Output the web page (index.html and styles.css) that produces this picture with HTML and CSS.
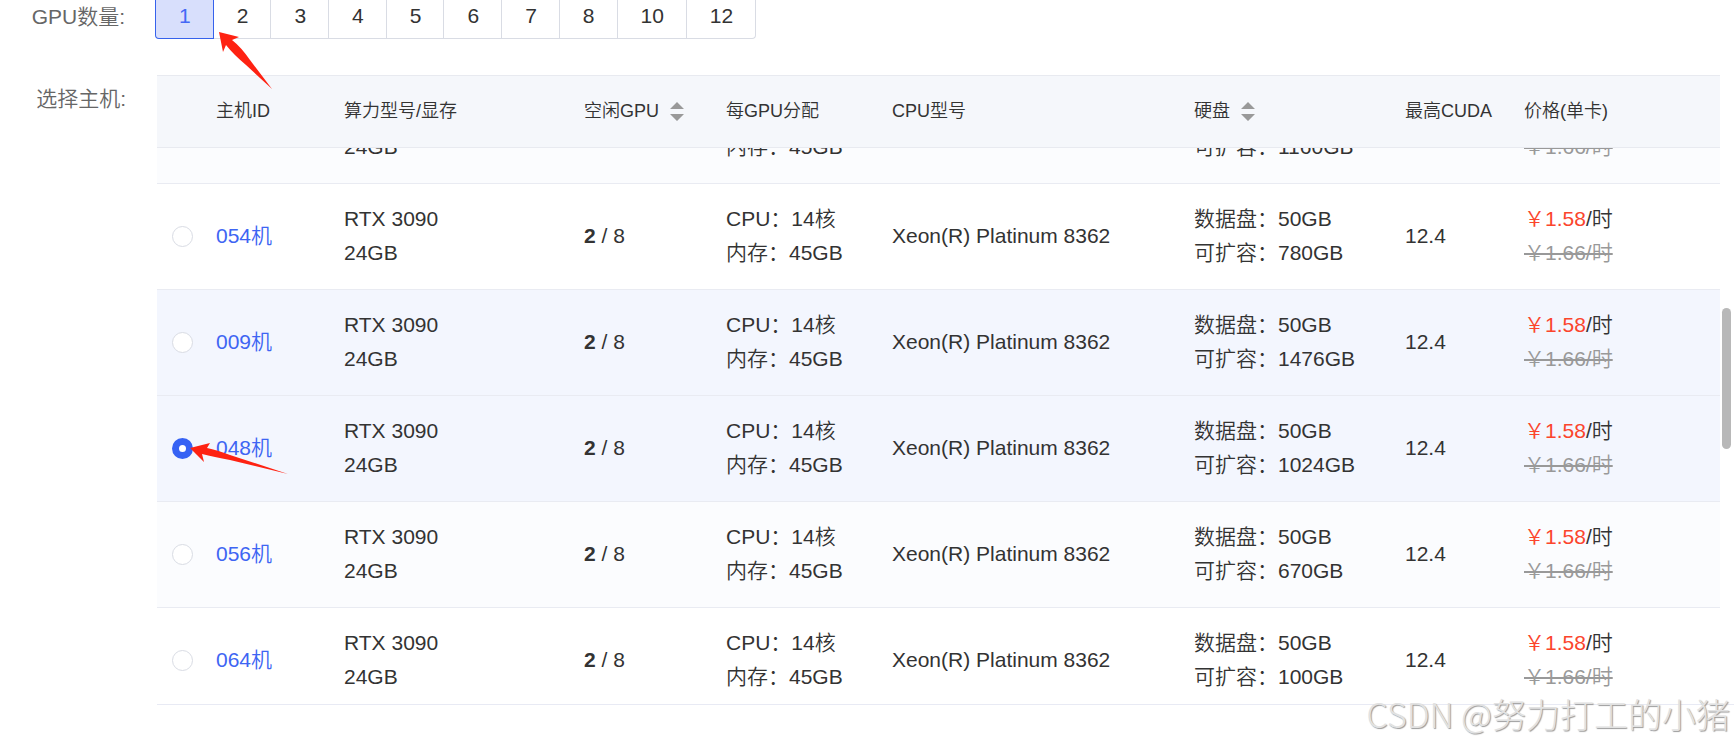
FILE: index.html
```html
<!DOCTYPE html>
<html lang="zh-CN">

<head>
    <meta charset="utf-8">
    <title>选择主机</title>
    <link rel="stylesheet" href="styles.css">
</head>

<body>
    <form class="form">
        <div class="form-item">
            <span class="form-label" id="count-label">GPU数量:</span>
            <div class="radio-group" role="radiogroup" aria-labelledby="count-label">
                <label class="radio-button"><input type="radio" name="count" value="1" checked><span>1</span></label>
                <label class="radio-button"><input type="radio" name="count" value="2"><span>2</span></label>
                <label class="radio-button"><input type="radio" name="count" value="3"><span>3</span></label>
                <label class="radio-button"><input type="radio" name="count" value="4"><span>4</span></label>
                <label class="radio-button"><input type="radio" name="count" value="5"><span>5</span></label>
                <label class="radio-button"><input type="radio" name="count" value="6"><span>6</span></label>
                <label class="radio-button"><input type="radio" name="count" value="7"><span>7</span></label>
                <label class="radio-button"><input type="radio" name="count" value="8"><span>8</span></label>
                <label class="radio-button"><input type="radio" name="count" value="10"><span>10</span></label>
                <label class="radio-button"><input type="radio" name="count" value="12"><span>12</span></label>
                <svg class="arrow arrow-count" width="54" height="58" viewBox="0 0 54 58">
                    <path d="M0 0L20 5L13 8Q22 15 31 28L53 57L27 33Q14 22 7 13L4 20Z" />
                </svg>
            </div>
        </div>

        <div class="form-item">
            <span class="form-label host-label" id="host-label">选择主机:</span>
            <div class="host-table">
                <table class="host-head">
                    <colgroup>
                        <col class="col-radio">
                        <col class="col-id">
                        <col class="col-model">
                        <col class="col-idle">
                        <col class="col-alloc">
                        <col class="col-cpu">
                        <col class="col-disk">
                        <col class="col-cuda">
                        <col>
                    </colgroup>
                    <thead>
                        <tr>
                            <th></th>
                            <th>主机ID</th>
                            <th>算力型号/显存</th>
                            <th>
                                <button type="button" class="sort">空闲GPU
                                    <svg width="14" height="20" viewBox="0 0 14 20"><path d="M0 8L7 1L14 8ZM0 13H14L7 20Z" /></svg>
                                </button>
                            </th>
                            <th>每GPU分配</th>
                            <th>CPU型号</th>
                            <th>
                                <button type="button" class="sort">硬盘
                                    <svg width="14" height="20" viewBox="0 0 14 20"><path d="M0 8L7 1L14 8ZM0 13H14L7 20Z" /></svg>
                                </button>
                            </th>
                            <th>最高CUDA</th>
                            <th>价格(单卡)</th>
                        </tr>
                    </thead>
                </table>
                <div class="host-body">
                    <div class="scroller" id="scroller">
                        <table aria-labelledby="host-label">
                            <colgroup>
                                <col class="col-radio">
                                <col class="col-id">
                                <col class="col-model">
                                <col class="col-idle">
                                <col class="col-alloc">
                                <col class="col-cpu">
                                <col class="col-disk">
                                <col class="col-cuda">
                                <col>
                            </colgroup>
                            <tbody>
                                <tr class="striped">
                                    <td class="pick"><input type="radio" name="host" aria-label="052机"></td>
                                    <td><a href="#">052机</a></td>
                                    <td>RTX 3090<br>24GB</td>
                                    <td><b>2</b> / 8</td>
                                    <td>CPU：14核<br>内存：45GB</td>
                                    <td>Xeon(R) Platinum 8362</td>
                                    <td>数据盘：50GB<br>可扩容：1160GB</td>
                                    <td>12.4</td>
                                    <td><span class="price">￥1.58</span>/时<br><del>￥1.66/时</del></td>
                                </tr>
                                <tr>
                                    <td class="pick"><input type="radio" name="host" aria-label="054机"></td>
                                    <td><a href="#">054机</a></td>
                                    <td>RTX 3090<br>24GB</td>
                                    <td><b>2</b> / 8</td>
                                    <td>CPU：14核<br>内存：45GB</td>
                                    <td>Xeon(R) Platinum 8362</td>
                                    <td>数据盘：50GB<br>可扩容：780GB</td>
                                    <td>12.4</td>
                                    <td><span class="price">￥1.58</span>/时<br><del>￥1.66/时</del></td>
                                </tr>
                                <tr class="active">
                                    <td class="pick"><input type="radio" name="host" aria-label="009机"></td>
                                    <td><a href="#">009机</a></td>
                                    <td>RTX 3090<br>24GB</td>
                                    <td><b>2</b> / 8</td>
                                    <td>CPU：14核<br>内存：45GB</td>
                                    <td>Xeon(R) Platinum 8362</td>
                                    <td>数据盘：50GB<br>可扩容：1476GB</td>
                                    <td>12.4</td>
                                    <td><span class="price">￥1.58</span>/时<br><del>￥1.66/时</del></td>
                                </tr>
                                <tr class="active">
                                    <td class="pick">
                                        <input type="radio" name="host" aria-label="048机" checked>
                                        <svg class="arrow arrow-host" width="98" height="34" viewBox="0 0 98 34">
                                            <path d="M0 6L20 1L17 6Q27 8 40 13L98 32L40 18Q24 15 12 12L14 20Z" />
                                        </svg>
                                    </td>
                                    <td><a href="#">048机</a></td>
                                    <td>RTX 3090<br>24GB</td>
                                    <td><b>2</b> / 8</td>
                                    <td>CPU：14核<br>内存：45GB</td>
                                    <td>Xeon(R) Platinum 8362</td>
                                    <td>数据盘：50GB<br>可扩容：1024GB</td>
                                    <td>12.4</td>
                                    <td><span class="price">￥1.58</span>/时<br><del>￥1.66/时</del></td>
                                </tr>
                                <tr class="striped">
                                    <td class="pick"><input type="radio" name="host" aria-label="056机"></td>
                                    <td><a href="#">056机</a></td>
                                    <td>RTX 3090<br>24GB</td>
                                    <td><b>2</b> / 8</td>
                                    <td>CPU：14核<br>内存：45GB</td>
                                    <td>Xeon(R) Platinum 8362</td>
                                    <td>数据盘：50GB<br>可扩容：670GB</td>
                                    <td>12.4</td>
                                    <td><span class="price">￥1.58</span>/时<br><del>￥1.66/时</del></td>
                                </tr>
                                <tr>
                                    <td class="pick"><input type="radio" name="host" aria-label="064机"></td>
                                    <td><a href="#">064机</a></td>
                                    <td>RTX 3090<br>24GB</td>
                                    <td><b>2</b> / 8</td>
                                    <td>CPU：14核<br>内存：45GB</td>
                                    <td>Xeon(R) Platinum 8362</td>
                                    <td>数据盘：50GB<br>可扩容：100GB</td>
                                    <td>12.4</td>
                                    <td><span class="price">￥1.58</span>/时<br><del>￥1.66/时</del></td>
                                </tr>
                            </tbody>
                        </table>
                    </div>
                    <div class="thumb"></div>
                </div>
            </div>
        </div>
    </form>
    <div class="watermark">CSDN @努力打工的小猪</div>

    <script>
        document.getElementById('scroller').scrollTop = 70
    </script>
</body>

</html>
```
FILE: styles.css
```css
* {
    box-sizing: border-box;
}

body {
    margin: 0;
    min-height: 100vh;
    position: relative;
    background: #fff;
    color: #333;
    font: 350 21px/34px "Liberation Sans", "Noto Sans CJK SC", sans-serif;
    overflow: hidden;
}

.form {
    display: flex;
    flex-direction: column;
    gap: 36px;
}

.form-item {
    display: flex;
    gap: 30px;
}

.form-label {
    flex: none;
    width: 125px;
    text-align: right;
    color: #666;
}

.host-label {
    width: 127px;
    padding: 7px 1px 0 0;
}

/* gpu count */
.radio-group {
    display: flex;
    position: relative;
}

.radio-button {
    cursor: pointer;
}

.radio-button input {
    position: absolute;
    opacity: 0;
}

.radio-button span {
    display: block;
    padding: 4px 22px 10px 23px;
    line-height: 24px;
    border: solid #d9dce4;
    border-width: 0 1px 1px 0;
}

.radio-button:first-child span {
    border-left-width: 1px;
    border-radius: 0 0 0 4px;
}

.radio-button:nth-last-child(2) span {
    border-radius: 0 0 4px 0;
}

.radio-button input:checked+span {
    background: #d8dffc;
    border-color: #3662ec;
    color: #4468f5;
}

/* hosts */
.host-table {
    flex: 1;
    min-width: 0;
}

.host-head {
    padding-right: 14px;
}

.host-body {
    position: relative;
    border-bottom: 1px solid #e8eaf4;
}

.scroller {
    height: 556px;
    padding-right: 14px;
    overflow-y: auto;
    scrollbar-width: none;
}

.thumb {
    position: absolute;
    top: 160px;
    right: 3px;
    width: 9px;
    height: 141px;
    border-radius: 5px;
    background: #b8b8b8;
}

table {
    width: 100%;
    table-layout: fixed;
    border-collapse: separate;
    border-spacing: 0;
}

.col-radio {
    width: 44px;
}

.col-id {
    width: 128px;
}

.col-model {
    width: 240px;
}

.col-idle {
    width: 142px;
}

.col-alloc {
    width: 166px;
}

.col-cpu {
    width: 302px;
}

.col-disk {
    width: 211px;
}

.col-cuda {
    width: 119px;
}

th {
    height: 73px;
    padding: 0 0 2px 15px;
    background: #f5f7fb;
    border: solid #e8eaf0;
    border-width: 1px 0;
    font-size: 18px;
    font-weight: 350;
    line-height: 24px;
    text-align: left;
    white-space: nowrap;
}

.sort {
    display: flex;
    align-items: center;
    gap: 11px;
    padding: 0;
    border: none;
    background: none;
    color: inherit;
    font: inherit;
    cursor: pointer;
}

.sort svg {
    fill: #999;
}

td {
    padding: 18px 0 19px 15px;
    border-bottom: 1px solid #e9ebf2;
    white-space: nowrap;
}

.striped td {
    background: #fbfcfe;
}

.active td {
    background: #f3f6fe;
}

.pick {
    position: relative;
}

.pick input {
    display: block;
    appearance: none;
    width: 21px;
    height: 21px;
    margin: 0;
    border: 1px solid #d9dce4;
    border-radius: 50%;
    background: #fff;
}

.pick input:checked {
    border: 7px solid #3662f4;
}

a {
    color: #3e65f3;
    text-decoration: none;
}

b {
    font-weight: bold;
}

.price {
    color: #fb452c;
}

del {
    color: #999;
}

.arrow {
    position: absolute;
    z-index: 1;
    fill: #fe2212;
    pointer-events: none;
}

.arrow-count {
    left: 64px;
    top: 32px;
}

.arrow-host {
    left: 33px;
    top: 46px;
}

.watermark {
    position: absolute;
    right: 4px;
    bottom: 7px;
    color: #e2e2e2;
    font: 300 34px/48px "Noto Sans CJK SC", sans-serif;
    text-shadow: 1px 1px 1px #999;
}
```
